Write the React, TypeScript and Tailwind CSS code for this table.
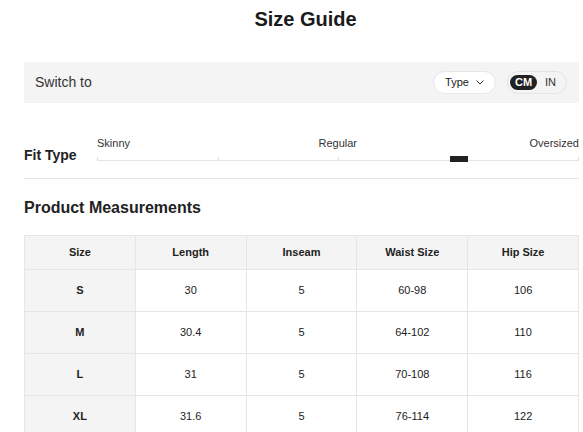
import React from "react";

const rows = [
  { size: "S", length: "30", inseam: "5", waist: "60-98", hip: "106" },
  { size: "M", length: "30.4", inseam: "5", waist: "64-102", hip: "110" },
  { size: "L", length: "31", inseam: "5", waist: "70-108", hip: "116" },
  { size: "XL", length: "31.6", inseam: "5", waist: "76-114", hip: "122" },
];

const headers = ["Size", "Length", "Inseam", "Waist Size", "Hip Size"];

const FitSlider = () => {
  return (
    <div className="flex-1">
      <div className="flex justify-between text-[11px] leading-[14px] pb-[3px] text-[#333]">
        <span>Skinny</span>
        <span className="pl-[16px]">Regular</span>
        <span>Oversized</span>
      </div>
      <div className="relative h-[12px]">
        <div className="absolute left-0 right-0 top-[7px] h-px bg-[#e5e5e5]" />
        {[0, 25, 50, 75, 100].map((p) => (
          <div
            key={p}
            className="absolute top-[4px] h-[3px] w-px bg-[#dcdcdc]"
            style={{ left: `calc(${p}% - ${p === 100 ? 1 : 0}px)` }}
          />
        ))}
        <div className="absolute top-[3px] h-[6px] w-[18px] bg-[#222]" style={{ left: "73.2%" }} />
      </div>
    </div>
  );
};

export default function App() {
  return (
    <div className="bg-white min-h-[432px] pl-6 pr-[4px] font-['Liberation_Sans',Arial,sans-serif] text-[#222]">
      {/* Title */}
      <h1 className="pt-[5px] text-center text-[20px] leading-7 font-bold text-[#1a1a1a] pl-[8px]">
        Size Guide
      </h1>

      {/* Switch bar */}
      <div className="mt-[29px] h-[41px] bg-[#f4f4f4] flex items-center justify-between pl-[11px] pr-[12px]">
        <span className="text-[14px] text-[#333]">Switch to</span>
        <div className="flex items-center gap-[11px]">
          <button className="h-[23px] w-[63px] rounded-full bg-white border border-[#e6e6e6] flex items-center justify-center gap-[7px] text-[11px] text-[#222]">
            Type
            <svg width="8" height="5" viewBox="0 0 8 5" fill="none" stroke="#333" strokeWidth="1">
              <path d="M0.5 0.5 L4 4 L7.5 0.5" />
            </svg>
          </button>
          <div className="h-[23px] w-[60px] rounded-full border border-[#e3e3e3] flex items-center pl-[2px] gap-[8px]">
            <span className="h-[15px] w-[27px] rounded-full bg-[#222] text-white text-[11px] font-bold flex items-center justify-center">
              CM
            </span>
            <span className="text-[11px] text-[#333]">IN</span>
          </div>
        </div>
      </div>

      {/* Fit type */}
      <div className="mt-[33px] flex items-end">
        <div className="w-[73px] mb-[2px] text-[14px] leading-4 font-bold">Fit Type</div>
        <FitSlider />
      </div>

      <div className="mt-[13px] border-t border-[#e5e5e5]" />

      {/* Product measurements */}
      <h2 className="mt-[17px] text-[16px] leading-6 font-bold">Product Measurements</h2>

      <table className="mt-[15px] w-[555px] border-collapse table-fixed text-[11px]">
        <thead>
          <tr className="h-[34px] bg-[#f4f4f4]">
            {headers.map((h) => (
              <th key={h} className="border border-[#e5e5e5] font-bold text-center">
                {h}
              </th>
            ))}
          </tr>
        </thead>
        <tbody>
          {rows.map((r) => (
            <tr key={r.size} className="h-[42px]">
              <td className="border border-[#e5e5e5] bg-[#f4f4f4] font-bold text-center">{r.size}</td>
              <td className="border border-[#e5e5e5] text-center">{r.length}</td>
              <td className="border border-[#e5e5e5] text-center">{r.inseam}</td>
              <td className="border border-[#e5e5e5] text-center">{r.waist}</td>
              <td className="border border-[#e5e5e5] text-center">{r.hip}</td>
            </tr>
          ))}
        </tbody>
      </table>
    </div>
  );
}
